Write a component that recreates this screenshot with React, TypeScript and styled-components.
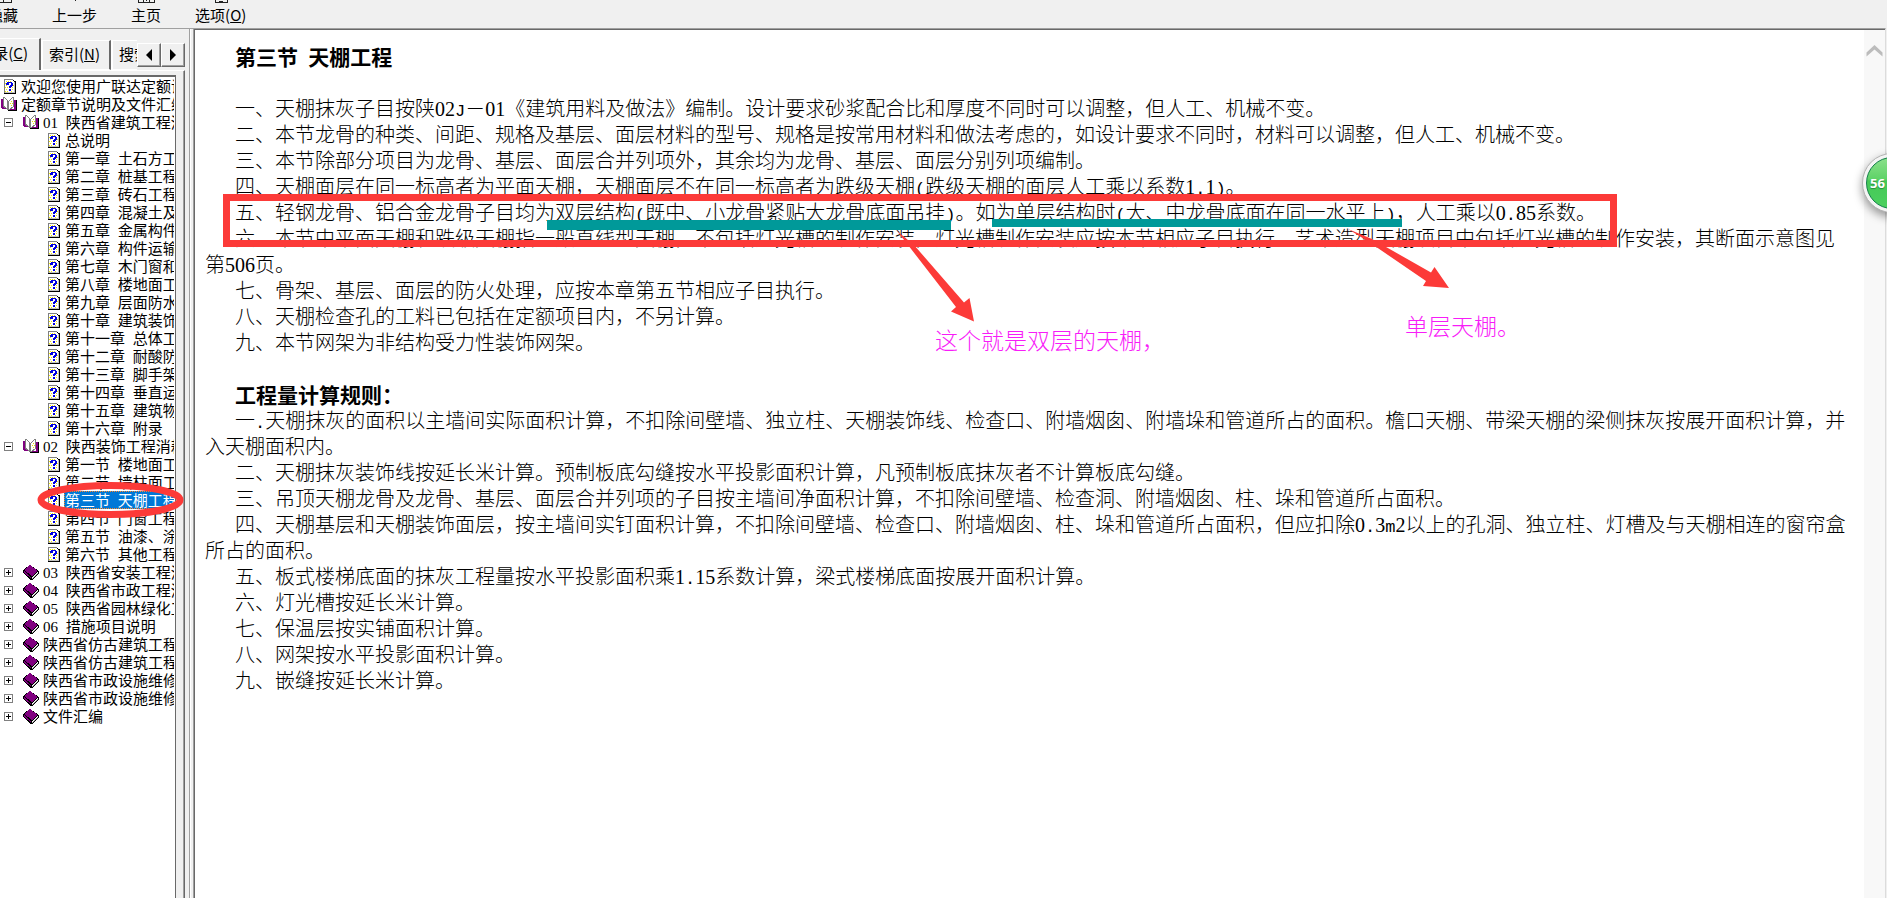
import React from 'react';
import styled, { createGlobalStyle, css } from 'styled-components';

const cjk = `"Noto Sans CJK SC", "Noto Sans", sans-serif`;
const markRed = '#fc3a38';
const teal = '#009999';

const GlobalStyle = createGlobalStyle`
  * { box-sizing: border-box; }
  body {
    margin: 0;
    background: #f0f0f0;
    color: #000;
    font-family: ${cjk};
    overflow: hidden;
  }
  button { font: inherit; color: inherit; border: 0; background: none; padding: 0; margin: 0; }
  ul, h1, h2, p { margin: 0; padding: 0; font-weight: inherit; }
  ul { list-style: none; }
`;

/* ---------- half-width text ---------- */

const Digits = styled.span`
  font-family: "Liberation Serif", serif;
  font-weight: 400;
  line-height: 0;
`;

const Mono = styled.span<{ $size: number }>`
  font-family: "Liberation Mono", monospace;
  font-size: ${(p) => p.$size}px;
  font-weight: 400;
  line-height: 0;
  white-space: pre-wrap;
`;

function Mixed({ text, mono }: { text: string; mono: number }) {
  const parts = text.split(/([0-9]+|[ -/:-~]+)/);
  return (
    <>
      {parts.map((part, i) => {
        if (/^[0-9]+$/.test(part)) return <Digits key={i}>{part}</Digits>;
        if (/^[ -~]+$/.test(part)) return <Mono key={i} $size={mono}>{part}</Mono>;
        return part;
      })}
    </>
  );
}

/* ---------- frame ---------- */

const Frame = styled.div`
  display: flex;
  flex-direction: column;
  height: 100vh;
`;

const Toolbar = styled.header`
  flex: none;
  display: flex;
  gap: 34px;
  height: 28px;
  margin-left: -12px;
  overflow: hidden;
`;

const ToolButton = styled.button`
  display: flex;
  flex-direction: column;
  align-items: center;
  font-size: 15px;
  line-height: 24px;
  white-space: nowrap;
  svg { display: block; flex: none; }
`;

const Body = styled.div`
  flex: 1;
  min-height: 0;
  display: flex;
`;

/* ---------- sidebar ---------- */

const Sidebar = styled.aside`
  position: relative;
  flex: none;
  width: 189px;
  display: flex;
  flex-direction: column;
  padding: 9px 4px 0 0;
  border-top: 1px solid #a0a0a0;
`;

const TabStrip = styled.div`
  display: flex;
  align-items: flex-end;
  height: 32px;
  font-size: 15px;
  line-height: 20px;
  overflow: hidden;
`;

const Tab = styled.button<{ $active?: boolean; $width: number }>`
  flex: none;
  width: ${(p) => p.$width}px;
  height: ${(p) => (p.$active ? 32 : 30)}px;
  border-top: 1px solid #fff;
  border-right: 2px solid #696969;
  border-bottom: ${(p) => (p.$active ? 0 : '1px solid #fff')};
  border-left: ${(p) => (p.$active ? 0 : '2px solid #fff')};
  white-space: nowrap;
  overflow: hidden;
  display: flex;
  justify-content: ${(p) => (p.$active ? 'flex-end' : 'flex-start')};
  align-items: center;
  padding: ${(p) => (p.$active ? '0 11px 4px 0' : '0 0 2px 6px')};
`;

const CutTab = styled(Tab)`
  border-right: 0;
`;

const Spinner = styled.div`
  display: flex;
  align-self: flex-end;
  padding-bottom: 3px;
  height: 27px;
`;

const SpinButton = styled.button`
  width: 24px;
  height: 24px;
  display: grid;
  place-items: center;
  background: #f0f0f0;
  border: 1px solid;
  border-color: #fff #696969 #696969 #fff;
  box-shadow: inset -1px -1px 0 #a0a0a0;
`;

const TabPage = styled.div`
  flex: 1;
  min-height: 0;
  border-top: 1px solid #fff;
  border-right: 1px solid #696969;
  box-shadow: inset -1px 0 0 #a0a0a0;
  padding: 4px 8px 0 0;
`;

const Tree = styled.nav`
  height: 100%;
  background: #fff;
  border-top: 2px solid #696969;
  border-right: 1px solid #696969;
  padding-right: 1px;
  font-size: 15px;
`;

const Rows = styled.ul`
  overflow: hidden;
`;

const Row = styled.li<{ $depth: number }>`
  display: flex;
  align-items: center;
  height: 18px;
  padding-left: ${(p) => [1, 4, 45][p.$depth]}px;
`;

const Expander = styled.button`
  flex: none;
  width: 9px;
  height: 9px;
  margin-right: 10px;
  svg { display: block; }
`;

const IconSlot = styled.span`
  flex: none;
  width: 16px;
  height: 16px;
  margin-right: 3px;
  svg { display: block; }
`;

const RowLink = styled.a<{ $selected?: boolean }>`
  flex: none;
  padding: 0 1px;
  line-height: 18px;
  height: 18px;
  white-space: nowrap;
  color: #000;
  text-decoration: none;
  ${(p) =>
    p.$selected &&
    css`
      background: #0078d7;
      color: #fff;
      outline: 1px dotted #ff8728;
      outline-offset: -1px;
    `}
`;

const Oval = styled.svg`
  position: absolute;
  left: 36px;
  top: 451px;
  pointer-events: none;
`;

const Splitter = styled.div`
  flex: none;
  width: 4px;
  border-top: 1px solid #a0a0a0;
  border-left: 1px solid #a0a0a0;
  box-shadow: inset 1px 0 0 #fff;
`;

/* ---------- document ---------- */

const Pane = styled.main`
  position: relative;
  flex: 1;
  min-width: 0;
  display: flex;
  margin-right: 1px;
  background: #fff;
  border-top: 1px solid #a0a0a0;
  border-left: 1px solid #a0a0a0;
  border-right: 1px solid #dcdcdc;
  box-shadow: inset 1px 1px 0 #696969;
`;

const Page = styled.article`
  flex: 1;
  min-width: 0;
  padding: 14px 14px 0 11px;
  font-size: 20px;
  font-weight: 300;
  line-height: 26px;
  text-spacing-trim: space-all;
`;

const Para = styled.p`
  text-indent: 30px;
`;

const Heading = styled.h1`
  font-size: 21px;
  font-weight: 700;
  text-indent: 30px;
`;

const Intro = styled.section`
  padding-bottom: 26px;
`;

const IntroHeading = styled(Heading)`
  padding-bottom: 26px;
`;

const ScrollTrack = styled.div`
  flex: none;
  width: 21px;
  margin-top: 1px;
  background: #f8f8f8;
`;

const ScrollUp = styled.button`
  display: grid;
  place-items: center;
  width: 21px;
  height: 42px;
`;

/* marks drawn over the text */

const Mark = styled.div<{ $x: number; $y: number; $w: number; $h: number }>`
  position: absolute;
  left: ${(p) => p.$x}px;
  top: ${(p) => p.$y}px;
  width: ${(p) => p.$w}px;
  height: ${(p) => p.$h}px;
`;

const RedBox = styled(Mark)`
  border: 7px solid ${markRed};
`;

const TealBar = styled(Mark)`
  background: ${teal};
`;

const Arrows = styled.svg`
  position: absolute;
  left: 696px;
  top: 196px;
`;

const Note = styled.span<{ $x: number; $y: number }>`
  position: absolute;
  left: ${(p) => p.$x}px;
  top: ${(p) => p.$y}px;
  color: #f81cf8;
  font-size: 23px;
  font-weight: 300;
  line-height: 28px;
  white-space: nowrap;
`;

const BadgeClip = styled.div`
  position: absolute;
  right: -2px;
  top: 116px;
  width: 40px;
  height: 90px;
  overflow: hidden;
`;

const Badge = styled.div`
  margin: 8px 0 0 15px;
  width: 60px;
  height: 60px;
  border-radius: 50%;
  border: 1px solid #b4b4b4;
  background: #f4f4f4;
  padding: 3px;
  box-shadow: 0 4px 10px rgba(0, 0, 0, 0.4);
`;

const BadgeFace = styled.div`
  height: 100%;
  border-radius: 50%;
  border: 1px solid #13804a;
  background: linear-gradient(#8be08b 0%, #5fd368 42%, #45c957 46%, #4cd05f 100%);
  color: #fff;
  font: 700 13px/50px "Open Sans", sans-serif;
  padding-left: 3px;
  text-shadow: 0 1px 1px #2a8a3c;
`;

/* ---------- icons ---------- */

const PageIcon = () => (
  <svg width="16" height="16" viewBox="0 0 16 16" shapeRendering="crispEdges">
    <path d="M3.5 1.5h8l2 2v11h-10z" fill="#fff" />
    <path d="M5 3h1v1H5zM7 3h1v1H7zM9 3h1v1H9zM4 5h1v1H4zM11 5h1v1h-1zM5 7h1v1H5zM4 9h1v1H4zM6 9h1v1H6zM11 9h1v1h-1zM5 11h1v1H5zM11 11h1v1h-1zM4 13h1v1H4zM6 13h1v1H6zM10 13h1v1h-1zM12 7h1v1h-1z" fill="#f5ec00" />
    <path d="M3.5 15V1.5H12" fill="none" stroke="#808080" />
    <path d="M12 2h1v1h-1zM13 3h1v1h-1z" fill="#000" />
    <path d="M14.5 3v12.5H3" fill="none" stroke="#000" />
    <path d="M13.500 4v10.500H4" fill="none" stroke="#c0c0c0" />
    <path d="M6 4h5v1H6zM5 5h3v2H5zM10 5h2v3h-2zM9 7h2v2H9zM8 8h2v2H8zM8 11h2v2H8z" fill="#0000e0" />
  </svg>
);

const OpenBookIcon = () => (
  <svg width="16" height="16" viewBox="0 0 16 16" shapeRendering="crispEdges">
    <path d="M0 3h2v8h3l2 2h6V4h3v11H7l-2-2H1L0 11z" fill="#800080" />
    <path d="M2.500 1.500h1l3 3v9l-2-2-2-1z" fill="#fff" stroke="#808080" />
    <path d="M7.500 5.500l4-4h1v9l-4 3h-1z" fill="#fff" stroke="#808080" />
    <path d="M10 5h1v1h-1zM11 7h1v1h-1zM10 9h1v1h-1zM9 7h1v1H9z" fill="#e8e000" />
    <path d="M15 4h1v11h-1zM7 14h9v1H7z" fill="#000" />
  </svg>
);

const ClosedBookIcon = () => (
  <svg width="16" height="16" viewBox="0 0 16 16" shapeRendering="crispEdges">
    <path d="M7 1l9 6v3l-7 6h-2L0 9V6z" fill="#000" />
    <path d="M7 1l8 6-6 5-8-6z" fill="#800080" />
    <path d="M1 7l7 6v1L1 9z" fill="#800080" />
    <path d="M9 13l6-5v2l-6 5z" fill="#fff" />
    <path d="M9 14l6-5v1l-6 5z" fill="#a0a0a0" />
  </svg>
);

const ExpanderIcon = ({ open }: { open: boolean }) => (
  <svg width="9" height="9" viewBox="0 0 9 9" shapeRendering="crispEdges">
    <rect x="0.5" y="0.5" width="8" height="8" fill="#fff" stroke="#808080" />
    <path d={open ? 'M2 4.500h5' : 'M2 4.500h5M4.500 2v5'} stroke="#000" fill="none" />
  </svg>
);

/* lower edge of each tool icon, the rest scrolled above the window */
const toolIcons: Record<string, string> = {
  hide: 'M2 0v2.500h16V0M10 0v2',
  back: 'M10 0v1',
  home: 'M2 0v2.500h16V0M7 0v2M13 0v2M10 0v1',
  options: 'M4 0v2.500h12V0M8 1.500h4',
};

const ToolIcon = ({ name }: { name: string }) => (
  <svg width="20" height="3" viewBox="0 0 20 3" shapeRendering="crispEdges">
    <path d={toolIcons[name]} fill="none" stroke="#222" />
  </svg>
);

/* ---------- data ---------- */

type Node = { depth: 0 | 1 | 2; icon: 'page' | 'open' | 'closed'; text: string; selected?: boolean };

const page = (text: string): Node => ({ depth: 2, icon: 'page', text });
const closed = (text: string): Node => ({ depth: 1, icon: 'closed', text });

const nodes: Node[] = [
  { depth: 0, icon: 'page', text: '欢迎您使用广联达定额说' },
  { depth: 0, icon: 'open', text: '定额章节说明及文件汇编' },
  { depth: 1, icon: 'open', text: '01 陕西省建筑工程消' },
  ...[
    '总说明', '第一章 土石方工程', '第二章 桩基工程', '第三章 砖石工程', '第四章 混凝土及', '第五章 金属构件',
    '第六章 构件运输', '第七章 木门窗和', '第八章 楼地面工程', '第九章 层面防水', '第十章 建筑装饰',
    '第十一章 总体工程', '第十二章 耐酸防', '第十三章 脚手架', '第十四章 垂直运', '第十五章 建筑物', '第十六章 附录',
  ].map(page),
  { depth: 1, icon: 'open', text: '02 陕西装饰工程消耗' },
  page('第一节 楼地面工程'),
  page('第二节 墙柱面工程'),
  { ...page('第三节 天棚工程'), selected: true },
  page('第四节 门窗工程'),
  page('第五节 油漆、涂'),
  page('第六节 其他工程'),
  ...[
    '03 陕西省安装工程消', '04 陕西省市政工程消', '05 陕西省园林绿化工', '06 措施项目说明',
    '陕西省仿古建筑工程', '陕西省仿古建筑工程', '陕西省市政设施维修', '陕西省市政设施维修', '文件汇编',
  ].map(closed),
];

const notes = [
  '一、天棚抹灰子目按陕02J－01《建筑用料及做法》编制。设计要求砂浆配合比和厚度不同时可以调整，但人工、机械不变。',
  '二、本节龙骨的种类、间距、规格及基层、面层材料的型号、规格是按常用材料和做法考虑的，如设计要求不同时，材料可以调整，但人工、机械不变。',
  '三、本节除部分项目为龙骨、基层、面层合并列项外，其余均为龙骨、基层、面层分别列项编制。',
  '四、天棚面层在同一标高者为平面天棚，天棚面层不在同一标高者为跌级天棚(跌级天棚的面层人工乘以系数1.1)。',
  '五、轻钢龙骨、铝合金龙骨子目均为双层结构(既中、小龙骨紧贴大龙骨底面吊挂)。如为单层结构时(大、中龙骨底面在同一水平上)，人工乘以0.85系数。',
  '六、本节中平面天棚和跌级天棚指一般直线型天棚，不包括灯光槽的制作安装，灯光槽制作安装应按本节相应子目执行。艺术造型天棚项目中包括灯光槽的制作安装，其断面示意图见第506页。',
  '七、骨架、基层、面层的防火处理，应按本章第五节相应子目执行。',
  '八、天棚检查孔的工料已包括在定额项目内，不另计算。',
  '九、本节网架为非结构受力性装饰网架。',
];

const rules = [
  '一.天棚抹灰的面积以主墙间实际面积计算，不扣除间壁墙、独立柱、天棚装饰线、检查口、附墙烟囱、附墙垛和管道所占的面积。檐口天棚、带梁天棚的梁侧抹灰按展开面积计算，并入天棚面积内。',
  '二、天棚抹灰装饰线按延长米计算。预制板底勾缝按水平投影面积计算，凡预制板底抹灰者不计算板底勾缝。',
  '三、吊顶天棚龙骨及龙骨、基层、面层合并列项的子目按主墙间净面积计算，不扣除间壁墙、检查洞、附墙烟囱、柱、垛和管道所占面积。',
  '四、天棚基层和天棚装饰面层，按主墙间实钉面积计算，不扣除间壁墙、检查口、附墙烟囱、柱、垛和管道所占面积，但应扣除0.3m2以上的孔洞、独立柱、灯槽及与天棚相连的窗帘盒所占的面积。',
  '五、板式楼梯底面的抹灰工程量按水平投影面积乘1.15系数计算，梁式楼梯底面按展开面积计算。',
  '六、灯光槽按延长米计算。',
  '七、保温层按实铺面积计算。',
  '八、网架按水平投影面积计算。',
  '九、嵌缝按延长米计算。',
];

const icons = { page: PageIcon, open: OpenBookIcon, closed: ClosedBookIcon };

function TreeRow({ node }: { node: Node }) {
  const Icon = icons[node.icon];
  return (
    <Row $depth={node.depth}>
      {node.depth === 1 && (
        <Expander aria-label={node.icon === 'open' ? '折叠' : '展开'}>
          <ExpanderIcon open={node.icon === 'open'} />
        </Expander>
      )}
      <IconSlot><Icon /></IconSlot>
      <RowLink href="#" $selected={node.selected}>
        <Mixed text={node.text} mono={13} />
      </RowLink>
    </Row>
  );
}

export default function App() {
  return (
    <Frame>
      <GlobalStyle />
      <Toolbar>
        <ToolButton><ToolIcon name="hide" />隐藏</ToolButton>
        <ToolButton><ToolIcon name="back" />上一步</ToolButton>
        <ToolButton><ToolIcon name="home" />主页</ToolButton>
        <ToolButton><ToolIcon name="options" /><span>选项(<u>O</u>)</span></ToolButton>
      </Toolbar>
      <Body>
        <Sidebar>
          <TabStrip role="tablist">
            <Tab role="tab" aria-selected $active $width={41}><span>目录(<u>C</u>)</span></Tab>
            <Tab role="tab" $width={70}><span>索引(<u>N</u>)</span></Tab>
            <CutTab role="tab" $width={26}>搜索</CutTab>
            <Spinner>
              <SpinButton aria-label="向左">
                <svg width="6" height="12"><path d="M6 0v12L0 6z" /></svg>
              </SpinButton>
              <SpinButton aria-label="向右">
                <svg width="6" height="12"><path d="M0 0v12l6-6z" /></svg>
              </SpinButton>
            </Spinner>
          </TabStrip>
          <TabPage>
            <Tree>
              <Rows>
                {nodes.map((node, i) => <TreeRow key={i} node={node} />)}
              </Rows>
            </Tree>
          </TabPage>
          <Oval width="150" height="40">
            <ellipse cx="74.500" cy="20" rx="69.500" ry="14.500" fill="none" stroke={markRed} strokeWidth="7" />
          </Oval>
        </Sidebar>
        <Splitter />
        <Pane>
          <Page>
            <Intro>
              <IntroHeading><Mixed text="第三节 天棚工程" mono={17} /></IntroHeading>
              {notes.map((text) => <Para key={text}><Mixed text={text} mono={17} /></Para>)}
            </Intro>
            <section>
              <Heading as="h2">工程量计算规则：</Heading>
              {rules.map((text) => <Para key={text}><Mixed text={text} mono={17} /></Para>)}
            </section>
          </Page>
          <ScrollTrack>
            <ScrollUp aria-label="向上滚动">
              <svg width="17" height="13" viewBox="0 0 17 13">
                <path d="M0.500 11.500v-4L8.500 0l8 7.500v4L8.500 4.500z" fill="#bcbcbc" />
              </svg>
            </ScrollUp>
          </ScrollTrack>
          <TealBar $x={353} $y={191} $w={404} $h={10} />
          <TealBar $x={798} $y={190} $w={410} $h={8} />
          <RedBox $x={29} $y={165} $w={1394} $h={53} />
          <Arrows width="570" height="110">
            <path d="M7 6L24 20L74 77.500L79.500 73L84 96.500L61 86.500L66 82L18 20z" fill={markRed} />
            <path d="M458 4L482 14L541 47.500L544.500 42L559 63L533 61L536 56L479 17z" fill={markRed} />
          </Arrows>
          <Note $x={741} $y={296}>这个就是双层的天棚，</Note>
          <Note $x={1211} $y={282}>单层天棚。</Note>
          <BadgeClip>
            <Badge><BadgeFace>56</BadgeFace></Badge>
          </BadgeClip>
        </Pane>
      </Body>
    </Frame>
  );
}
